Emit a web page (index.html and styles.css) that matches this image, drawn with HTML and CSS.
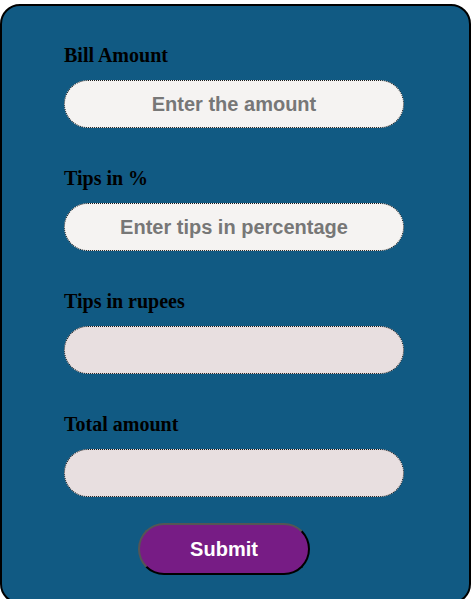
FILE: index.html
```html
<!DOCTYPE html>
<html>
<head>
<meta charset="utf-8">
<link rel="stylesheet" href="styles.css">
</head>
<body>
<div class="card">
  <label class="label">Bill Amount</label>
  <input class="field" type="text" placeholder="Enter the amount">
  <label class="label">Tips in %</label>
  <input class="field" type="text" placeholder="Enter tips in percentage">
  <label class="label">Tips in rupees</label>
  <input class="field field-ro" type="text" readonly>
  <label class="label">Total amount</label>
  <input class="field field-ro" type="text" readonly>
  <button class="submit">Submit</button>
</div>
</body>
</html>
```
FILE: styles.css
```css
html, body {
  margin: 0;
  padding: 0;
  background: #ffffff;
}
body {
  padding-top: 4px;
  overflow: hidden;
}
.card {
  box-sizing: border-box;
  width: 471px;
  height: 600px;
  background: #115a83;
  border: 2px solid #000;
  border-radius: 20px;
  padding: 39px 0 0 62px;
  display: flex;
  flex-direction: column;
  align-items: flex-start;
}
.label {
  font-family: "Liberation Serif", "Times New Roman", serif;
  font-weight: bold;
  font-size: 20px;
  line-height: 20px;
  color: #000;
  margin-bottom: 15px;
}
.field {
  box-sizing: border-box;
  width: 340px;
  height: 48px;
  border: 1px dotted #1a1a1a;
  border-radius: 24px;
  background: #f5f3f2;
  margin: 0 0 40px 0;
  padding: 0 10px;
  font-family: "Liberation Sans", Arial, sans-serif;
  font-weight: bold;
  font-size: 20px;
  text-align: center;
  color: #333;
  outline: none;
}
.field::placeholder {
  color: #777777;
  opacity: 1;
}
.field-ro {
  background: #e8dfe0;
}
.field:last-of-type {
  margin-bottom: 26px;
}
.submit {
  box-sizing: border-box;
  margin-left: 74px;
  width: 172px;
  height: 52px;
  background: #771c85;
  border: 2px solid #000;
  border-top-color: #555;
  border-left-color: #555;
  border-radius: 26px;
  color: #fff;
  font-family: "Liberation Sans", Arial, sans-serif;
  font-weight: bold;
  font-size: 20px;
  padding: 0;
}
```
